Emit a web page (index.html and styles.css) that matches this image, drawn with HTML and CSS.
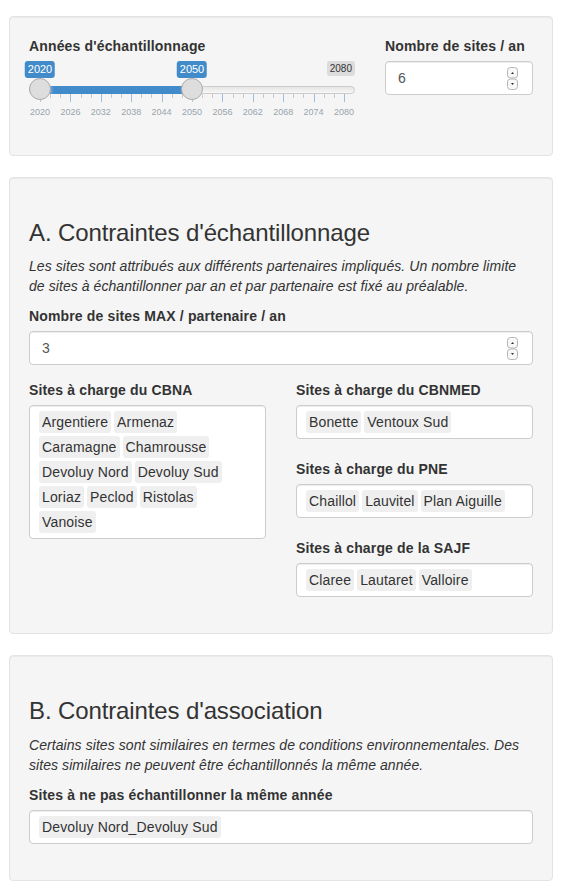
FILE: index.html
```html
<!DOCTYPE html>
<html lang="fr">
<head>
<meta charset="utf-8">
<title>Échantillonnage</title>
<link rel="stylesheet" href="styles.css">
</head>
<body>
<div class="page">
  <div class="well well-top">
    <div class="row">
      <div class="col col-8">
        <div class="form-group">
          <label class="control-label">Années d'échantillonnage</label>
          <div class="irs">
            <span class="irs-line"></span>
            <span class="irs-bar" style="left:11px;width:152px"></span>
            <span class="irs-max">2080</span>
            <span class="irs-from" style="left:11px">2020</span>
            <span class="irs-to" style="left:163px">2050</span>
            <span class="irs-grid">
              <span class="pol" style="left:0%"></span>
              <span class="pol small" style="left:3.333%"></span>
              <span class="pol small" style="left:6.667%"></span>
              <span class="pol" style="left:10%"></span>
              <span class="pol small" style="left:13.333%"></span>
              <span class="pol small" style="left:16.667%"></span>
              <span class="pol" style="left:20%"></span>
              <span class="pol small" style="left:23.333%"></span>
              <span class="pol small" style="left:26.667%"></span>
              <span class="pol" style="left:30%"></span>
              <span class="pol small" style="left:33.333%"></span>
              <span class="pol small" style="left:36.667%"></span>
              <span class="pol" style="left:40%"></span>
              <span class="pol small" style="left:43.333%"></span>
              <span class="pol small" style="left:46.667%"></span>
              <span class="pol" style="left:50%"></span>
              <span class="pol small" style="left:53.333%"></span>
              <span class="pol small" style="left:56.667%"></span>
              <span class="pol" style="left:60%"></span>
              <span class="pol small" style="left:63.333%"></span>
              <span class="pol small" style="left:66.667%"></span>
              <span class="pol" style="left:70%"></span>
              <span class="pol small" style="left:73.333%"></span>
              <span class="pol small" style="left:76.667%"></span>
              <span class="pol" style="left:80%"></span>
              <span class="pol small" style="left:83.333%"></span>
              <span class="pol small" style="left:86.667%"></span>
              <span class="pol" style="left:90%"></span>
              <span class="pol small" style="left:93.333%"></span>
              <span class="pol small" style="left:96.667%"></span>
              <span class="pol" style="left:100%"></span>
              <span class="gtext" style="left:0%">2020</span>
              <span class="gtext" style="left:10%">2026</span>
              <span class="gtext" style="left:20%">2032</span>
              <span class="gtext" style="left:30%">2038</span>
              <span class="gtext" style="left:40%">2044</span>
              <span class="gtext" style="left:50%">2050</span>
              <span class="gtext" style="left:60%">2056</span>
              <span class="gtext" style="left:70%">2062</span>
              <span class="gtext" style="left:80%">2068</span>
              <span class="gtext" style="left:90%">2074</span>
              <span class="gtext" style="left:100%">2080</span>
            </span>
            <span class="irs-slider" style="left:0px"></span>
            <span class="irs-slider" style="left:152px"></span>
          </div>
        </div>
      </div>
      <div class="col col-4">
        <div class="form-group">
          <label class="control-label" for="nsites">Nombre de sites / an</label>
          <div class="num-wrap">
            <input class="form-control" id="nsites" type="number" value="6">
            <span class="spin" aria-hidden="true">
              <svg width="11" height="23" viewBox="0 0 11 23">
                <rect x="0.5" y="0.5" width="10" height="10.5" rx="3" fill="#f8f8f8" stroke="#b4b4b4"/>
                <rect x="0.5" y="12" width="10" height="10.5" rx="3" fill="#f8f8f8" stroke="#b4b4b4"/>
                <path d="M4 7 L5.5 5 L7 7 Z" fill="#333"/>
                <path d="M4 16 L5.5 18 L7 16 Z" fill="#333"/>
              </svg>
            </span>
          </div>
        </div>
      </div>
    </div>
  </div>

  <div class="well">
    <h3 class="section-title">A. Contraintes d'échantillonnage</h3>
    <p class="intro">Les sites sont attribués aux différents partenaires impliqués. Un nombre limite de sites à échantillonner par an et par partenaire est fixé au préalable.</p>
    <div class="form-group">
      <label class="control-label" for="nmax">Nombre de sites MAX / partenaire / an</label>
      <div class="num-wrap">
        <input class="form-control" id="nmax" type="number" value="3">
        <span class="spin" aria-hidden="true">
          <svg width="11" height="23" viewBox="0 0 11 23">
            <rect x="0.5" y="0.5" width="10" height="10.5" rx="3" fill="#f8f8f8" stroke="#b4b4b4"/>
            <rect x="0.5" y="12" width="10" height="10.5" rx="3" fill="#f8f8f8" stroke="#b4b4b4"/>
            <path d="M4 7 L5.5 5 L7 7 Z" fill="#333"/>
            <path d="M4 16 L5.5 18 L7 16 Z" fill="#333"/>
          </svg>
        </span>
      </div>
    </div>
    <div class="row">
      <div class="col col-6">
        <div class="form-group">
          <label class="control-label">Sites à charge du CBNA</label>
          <div class="selectize-control">
            <div class="selectize-input">
              <div class="item">Argentiere</div><div class="item">Armenaz</div><div class="item">Caramagne</div><div class="item">Chamrousse</div><div class="item">Devoluy Nord</div><div class="item">Devoluy Sud</div><div class="item">Loriaz</div><div class="item">Peclod</div><div class="item">Ristolas</div><div class="item">Vanoise</div>
            </div>
          </div>
        </div>
      </div>
      <div class="col col-6 col-stack">
        <div class="form-group">
          <label class="control-label">Sites à charge du CBNMED</label>
          <div class="selectize-control">
            <div class="selectize-input">
              <div class="item">Bonette</div><div class="item">Ventoux Sud</div>
            </div>
          </div>
        </div>
        <div class="form-group">
          <label class="control-label">Sites à charge du PNE</label>
          <div class="selectize-control">
            <div class="selectize-input">
              <div class="item">Chaillol</div><div class="item">Lauvitel</div><div class="item">Plan Aiguille</div>
            </div>
          </div>
        </div>
        <div class="form-group">
          <label class="control-label">Sites à charge de la SAJF</label>
          <div class="selectize-control">
            <div class="selectize-input">
              <div class="item">Claree</div><div class="item">Lautaret</div><div class="item">Valloire</div>
            </div>
          </div>
        </div>
      </div>
    </div>
  </div>

  <div class="well well-b">
    <h3 class="section-title">B. Contraintes d'association</h3>
    <p class="intro">Certains sites sont similaires en termes de conditions environnementales. Des sites similaires ne peuvent être échantillonnés la même année.</p>
    <div class="form-group">
      <label class="control-label">Sites à ne pas échantillonner la même année</label>
      <div class="selectize-control">
        <div class="selectize-input">
          <div class="item">Devoluy Nord_Devoluy Sud</div>
        </div>
      </div>
    </div>
  </div>
</div>
</body>
</html>
```

FILE: styles.css
```css
* {
  box-sizing: border-box;
}

html,
body {
  margin: 0;
  padding: 0;
  background: #ffffff;
}

body {
  font-family: "Liberation Sans", Arial, Helvetica, sans-serif;
  font-size: 14px;
  line-height: 1.42857143;
  color: #333333;
}

.page {
  padding: 16px 10px 0 9px;
}

.well {
  padding: 19px;
  margin-bottom: 21px;
  background: #f5f5f5;
  border: 1px solid #e3e3e3;
  border-radius: 4px;
  box-shadow: inset 0 1px 1px rgba(0, 0, 0, 0.05);
}

.row {
  display: flex;
  margin: 0 -15px;
}

.col {
  padding: 0 15px;
}

.col-8 {
  width: 66.6667%;
}

.col-4 {
  width: 33.3333%;
}

.col-6 {
  width: 50%;
}

.form-group {
  margin-bottom: 15px;
}

.col-stack .form-group:last-child,
.well-b .form-group:last-child {
  margin-bottom: 12px;
}

.control-label {
  display: inline-block;
  max-width: 100%;
  margin-bottom: 5px;
  font-weight: 700;
  letter-spacing: 0.15px;
}

.num-wrap {
  position: relative;
}

.form-control {
  display: block;
  width: 100%;
  height: 34px;
  padding: 6px 12px;
  font-family: inherit;
  font-size: 14px;
  line-height: 1.42857143;
  color: #555555;
  background: #ffffff;
  border: 1px solid #cccccc;
  border-radius: 4px;
  box-shadow: inset 0 1px 1px rgba(0, 0, 0, 0.075);
  -moz-appearance: textfield;
}

.form-control::-webkit-inner-spin-button,
.form-control::-webkit-outer-spin-button {
  -webkit-appearance: none;
  margin: 0;
}

.spin {
  position: absolute;
  top: 6px;
  right: 15px;
  width: 11px;
  height: 23px;
  line-height: 0;
}

.section-title {
  margin: 23px 0 10px;
  font-size: 24px;
  font-weight: 500;
  line-height: 1.1;
  letter-spacing: -0.12px;
}

.intro {
  margin: 0 0 10px;
  font-style: italic;
  letter-spacing: 0.07px;
}

/* selectize */
.selectize-control {
  padding-bottom: 5px;
}

.selectize-input {
  display: flex;
  flex-wrap: wrap;
  min-height: 34px;
  padding: 5px 9px 2px;
  background: #ffffff;
  border: 1px solid #cccccc;
  border-radius: 4px;
  box-shadow: inset 0 1px 1px rgba(0, 0, 0, 0.075);
}

.item {
  margin: 0 3px 3px 0;
  padding: 1px 3px;
  line-height: 20px;
  letter-spacing: 0.15px;
  color: #333333;
  background: #efefef;
  border-radius: 3px;
}

/* range slider */
.irs {
  position: relative;
  height: 60px;
  font-family: Arial, "Liberation Sans", sans-serif;
}

.irs-line {
  position: absolute;
  left: 0;
  right: 0;
  top: 25px;
  height: 8px;
  background: linear-gradient(to bottom, #dddddd -50%, #ffffff 150%);
  border: 1px solid #cccccc;
  border-radius: 16px;
}

.irs-bar {
  position: absolute;
  top: 25px;
  height: 8px;
  background: #428bca;
  border-top: 1px solid #428bca;
  border-bottom: 1px solid #428bca;
}

.irs-slider {
  position: absolute;
  top: 17px;
  width: 22px;
  height: 22px;
  background: #dddddd;
  border: 1px solid #aaaaaa;
  border-radius: 27px;
  box-shadow: 1px 1px 3px rgba(255, 255, 255, 0.3);
  z-index: 2;
}

.irs-max {
  position: absolute;
  top: 0;
  right: 0;
  padding: 1px 3px;
  font-size: 10px;
  line-height: 1.333;
  color: #333333;
  background: rgba(0, 0, 0, 0.1);
  border-radius: 3px;
}

.irs-from,
.irs-to {
  position: absolute;
  top: 0;
  padding: 1px 3px;
  font-size: 11px;
  line-height: 1.333;
  color: #ffffff;
  background: #428bca;
  border-radius: 3px;
  transform: translateX(-50%);
  white-space: nowrap;
}

.irs-grid {
  position: absolute;
  left: 11px;
  right: 11px;
  bottom: 0;
  height: 27px;
}

.pol {
  position: absolute;
  top: 0;
  width: 1px;
  height: 8px;
  background: #428bca;
  opacity: 0.5;
}

.pol.small {
  height: 4px;
  background: #999999;
}

.gtext {
  position: absolute;
  bottom: 4px;
  padding: 0 3px;
  font-size: 9px;
  line-height: 9px;
  color: #99a4ac;
  white-space: nowrap;
  transform: translateX(-50%);
}
```
